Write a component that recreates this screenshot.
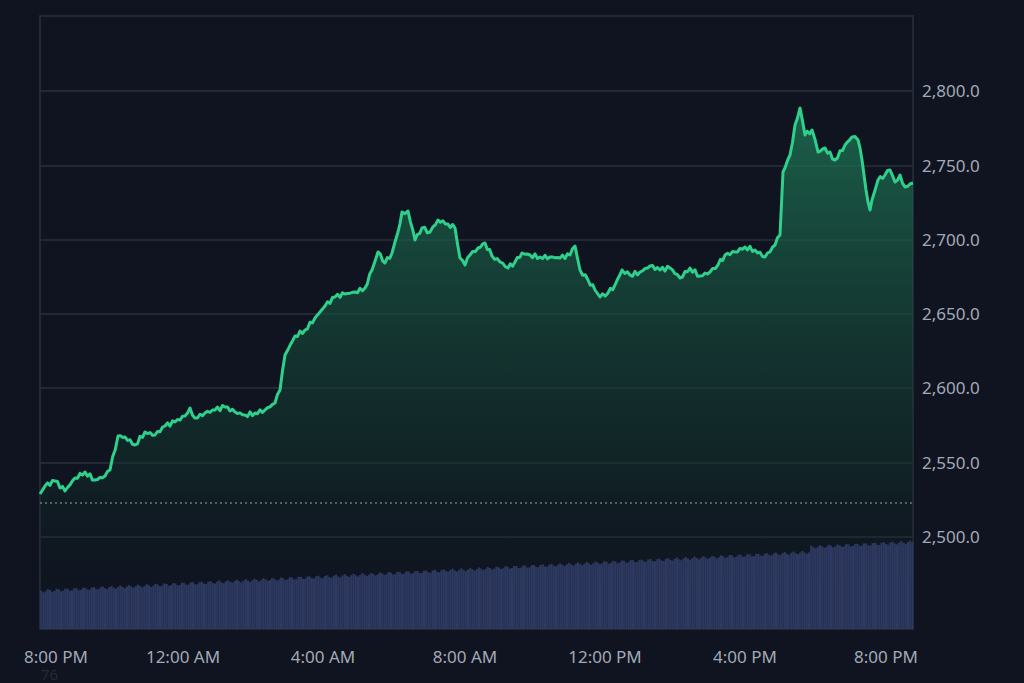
const pts: [number, number][] = [
  [40,494],[45,486],[55,481],[65,491],[75,478],[85,472],[95,480],[105,476],[110,470],[118,436],[125,437],[135,445],[145,432],[155,435],[165,426],[175,422],[185,416],[190,408],[195,418],[205,413],[215,410],[225,407],[235,412],[245,415],[255,413],[265,410],[275,403],[280,390],[285,355],[295,336],[305,330],[315,318],[325,306],[335,297],[345,294],[355,292],[365,288],[372,270],[378,252],[385,263],[392,253],[398,232],[402,212],[408,211],[415,240],[422,228],[430,232],[438,220],[448,224],[455,228],[460,258],[465,265],[470,255],[478,248],[485,243],[492,256],[500,262],[508,268],[515,262],[522,253],[530,255],[540,257],[550,257],[560,258],[570,255],[575,246],[580,270],[588,280],[595,290],[600,297],[608,293],[615,285],[622,270],[630,275],[640,272],[650,266],[660,270],[670,268],[680,278],[690,268],[700,276],[710,272],[718,265],[725,255],[735,252],[745,247],[755,250],[765,257],[775,245],[780,235],[783,172],[790,155],[795,125],[800,108],[805,135],[812,130],[818,152],[825,148],[835,160],[845,145],[852,137],[858,140],[862,160],[866,190],[870,210],[872,200],[878,180],[885,175],[890,170],[895,182],[900,175],[905,187],[913,183],
];

// densify with small deterministic jitter
const line: [number, number][] = [];
for (let i = 0; i < pts.length - 1; i++) {
  const [x1, y1] = pts[i];
  const [x2, y2] = pts[i + 1];
  const n = Math.max(1, Math.round((x2 - x1) / 2.5));
  for (let k = 0; k < n; k++) {
    const t = k / n;
    const j = k === 0 ? 0 : Math.sin(i * 7.3 + k * 3.1) * 2.2;
    line.push([x1 + (x2 - x1) * t, y1 + (y2 - y1) * t + j]);
  }
}
line.push(pts[pts.length - 1]);

const d = line.map(([x, y], i) => `${i ? "L" : "M"}${x.toFixed(1)},${y.toFixed(1)}`).join(" ");
const area = `${d} L913,629 L40,629 Z`;

const bars: { x: number; h: number }[] = [];
for (let x = 40; x < 913; x += 2.2) {
  const t = (x - 40) / 873;
  let h = 38 + t * 44 + Math.sin(x * 0.7) * 1.5;
  if (x > 808) h += 5;
  bars.push({ x, h });
}

const grid = [91, 166, 240, 314, 388, 463, 537];
const yLabels = ["2,800.0", "2,750.0", "2,700.0", "2,650.0", "2,600.0", "2,550.0", "2,500.0"];
const xLabels: [number, string][] = [
  [56, "8:00 PM"], [183, "12:00 AM"], [323, "4:00 AM"], [465, "8:00 AM"],
  [605, "12:00 PM"], [745, "4:00 PM"], [886, "8:00 PM"],
];

export default function App() {
  return (
    <div className="w-[1024px] h-[683px] bg-[#0f1420] overflow-hidden font-['Liberation_Sans',Arial,sans-serif]">
      <svg width="1024" height="683" viewBox="0 0 1024 683">
        <defs>
          <linearGradient id="g" x1="0" y1="0" x2="0" y2="1">
            <stop offset="0%" stopColor="#1f7a58" stopOpacity="0.75" />
            <stop offset="70%" stopColor="#12302a" stopOpacity="0.5" />
            <stop offset="100%" stopColor="#0f1420" stopOpacity="0" />
          </linearGradient>
        </defs>
        <rect x="40" y="16" width="873" height="613" fill="none" stroke="#2a303c" strokeWidth="1.5" />
        {grid.map((y) => (
          <line key={y} x1="40" x2="913" y1={y} y2={y} stroke="#2a303c" strokeWidth="1.5" />
        ))}
        <path d={area} fill="url(#g)" />
        {bars.map((b, i) => (
          <rect key={i} x={b.x} y={629 - b.h} width="2.3" height={b.h} fill={i % 5 === 0 ? "#2a3558" : "#2d3960"} />
        ))}
        <line x1="40" x2="913" y1="503" y2="503" stroke="#9aa0ab" strokeWidth="1" strokeDasharray="2 3" />
        <path d={d} fill="none" stroke="#2fd08c" strokeWidth="3" strokeLinejoin="round" />
        {yLabels.map((l, i) => (
          <text key={l} x="922" y={grid[i] + 6} fill="#a3a9b6" fontSize="17">{l}</text>
        ))}
        {xLabels.map(([x, l], i) => (
          <text key={i} x={x} y="663" textAnchor="middle" fill="#a3a9b6" fontSize="17">{l}</text>
        ))}
        <text x="41" y="680" fill="#252a33" fontSize="15">76</text>
      </svg>
    </div>
  );
}
